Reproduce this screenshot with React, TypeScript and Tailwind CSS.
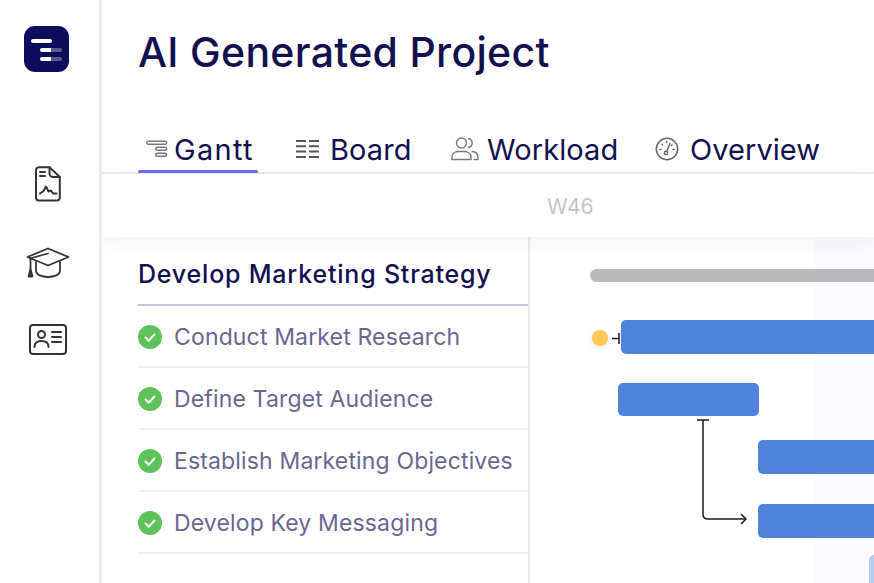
import React from "react";

const navy = "#12104f";

function Logo() {
  return (
    <div className="relative w-[45px] h-[46px] ml-[-3px] rounded-[11px] bg-[#0e0c5c]">
      <div className="absolute left-[7px] top-[13px] w-[21px] h-[4px] rounded-full bg-white" />
      <div className="absolute left-[16px] top-[22px] w-[22px] h-[4px] rounded-full bg-gradient-to-r from-white from-50% to-[#5a5890] to-50%" />
      <div className="absolute left-[16px] top-[31px] w-[22px] h-[4px] rounded-full bg-gradient-to-r from-white from-50% to-[#5a5890] to-50%" />
    </div>
  );
}

function DocIcon() {
  return (
    <svg width="26" height="36" viewBox="0 0 26 36" fill="none" stroke="#33333b" strokeWidth="2" strokeLinecap="round" strokeLinejoin="round">
      <path d="M4 1.2H14.5L24.8 11V31.5a3 3 0 0 1-3 3H4a3 3 0 0 1-3-3V4.2a3 3 0 0 1 3-3Z" />
      <path d="M14.5 1.2V7.5a3.5 3.5 0 0 0 3.5 3.5H24.8" />
      <path d="M5 6H10M5 10H10" />
      <path d="M5 27.5L8.5 25L11 20.5L13.5 25.5L16 24.5L18 27.5H21.5" />
    </svg>
  );
}

function CapIcon() {
  return (
    <svg width="44" height="32" viewBox="0 0 44 32" fill="none" stroke="#33333b" strokeWidth="1.8" strokeLinecap="round" strokeLinejoin="round">
      <path d="M22 1.5L42.5 10L22 18.5L1.5 10Z" />
      <path d="M4 11.5L22 6.5" />
      <path d="M10 15V23.5C10 28 16 30 22 30C28 30 34 28 34 23.5V15" />
      <path d="M4.5 11.5V22" />
      <path d="M4.5 22L6.5 29.5H2.5Z" fill="#33333b" />
    </svg>
  );
}

function IdIcon() {
  return (
    <svg width="38" height="31" viewBox="0 0 38 31" fill="none" stroke="#33333b" strokeWidth="2" strokeLinecap="round" strokeLinejoin="round">
      <rect x="1" y="1" width="36" height="29" rx="3" />
      <circle cx="12.5" cy="10.5" r="3.5" />
      <path d="M5.5 23C5.5 19 8.5 17 12.5 17C16.5 17 19.5 19 19.5 23" />
      <path d="M23 8H32M23 13H32M23 18H32" />
    </svg>
  );
}

function GanttIcon() {
  return (
    <svg width="22" height="18" viewBox="0 0 22 18" fill="none" stroke="#77777f" strokeWidth="1.4">
      <rect x="0.7" y="1.2" width="20" height="3" rx="1.5" />
      <rect x="9.7" y="7.2" width="11" height="3" rx="1.5" />
      <rect x="9.7" y="13.2" width="11" height="3" rx="1.5" />
    </svg>
  );
}

function BoardIcon() {
  return (
    <svg width="23" height="20" viewBox="0 0 23 20" fill="none" stroke="#55555c" strokeWidth="2">
      <path d="M0 2H10M0 7.3H10M0 12.6H10M0 18H10M13 2H23M13 7.3H23M13 12.6H23M13 18H23" />
    </svg>
  );
}

function PeopleIcon() {
  return (
    <svg width="28" height="24" viewBox="0 0 28 24" fill="none" stroke="#77777f" strokeWidth="1.4" strokeLinecap="round" strokeLinejoin="round">
      <circle cx="10.5" cy="6" r="5" />
      <path d="M1 22.5V20C1 16.5 4 14.5 7.5 14.5H13.5C17 14.5 20 16.5 20 20V22.5Z" />
      <path d="M17.5 1.5A4.6 4.6 0 0 1 17.5 10.5" />
      <path d="M21 14.5C24.5 14.8 27 16.8 27 20V22.5H23" />
    </svg>
  );
}

function GaugeIcon() {
  return (
    <svg width="24" height="24" viewBox="0 0 24 24" fill="none" stroke="#66666d" strokeWidth="1.5" strokeLinecap="round">
      <circle cx="12" cy="12" r="10.7" />
      <circle cx="11" cy="16" r="1.7" />
      <path d="M11.7 14.4L15 6.5" />
      <path d="M5 12.5H6M7 7.5L7.6 8M11.5 4.5V5.5M18 12.5H19M17 8L16.6 8.4" />
    </svg>
  );
}

function Check() {
  return (
    <svg width="24" height="24" viewBox="0 0 24 24" fill="none" className="shrink-0">
      <circle cx="12" cy="12" r="12" fill="#5ec15a" />
      <path d="M7.5 12.5L10.7 15.7L16.5 9.5" stroke="#fff" strokeWidth="2" strokeLinecap="round" strokeLinejoin="round" />
    </svg>
  );
}

function Tab({ icon, label, gap, width, text, active }: { icon: React.ReactNode; label: string; gap: string; width: string; text: string; active?: boolean }) {
  return (
    <div className={`relative flex items-center h-[46px] ${gap} ${width}`}>
      {icon}
      <span className={`relative top-[1px] text-[29px] leading-[34px] text-[#12104f] ${text}`}>{label}</span>
      {active && <div className="absolute left-0 right-0 bottom-[-1px] h-[3px] rounded-full bg-[#6a6af0]" />}
    </div>
  );
}

const tasks = ["Conduct Market Research", "Define Target Audience", "Establish Marketing Objectives", "Develop Key Messaging"];

export default function App() {
  return (
    <div className="flex w-[874px] h-[583px] overflow-hidden bg-white font-['Inter','Liberation_Sans',sans-serif]">
      <aside className="flex flex-col items-center w-[102px] shrink-0 border-r-[3px] border-[#e8e8ee] pt-[26px] pr-[3px]">
        <Logo />
        <div className="mt-[94px]"><DocIcon /></div>
        <div className="mt-[45px]"><CapIcon /></div>
        <div className="mt-[45px]"><IdIcon /></div>
      </aside>
      <main className="flex flex-col flex-1 min-w-0 overflow-hidden">
        <h1 className="pl-[36px] pt-[27px] h-[126px] text-[41px] leading-[50px] font-[450] tracking-[0.3px]" style={{ color: navy }}>AI Generated Project</h1>
        <nav className="flex h-[48px] pl-[36px] border-b-2 border-[#e9e9ef]">
          <Tab icon={<GanttIcon />} label="Gantt" gap="gap-[6px]" width="w-[120px] pl-[8px]" text="tracking-[1.3px]" active />
          <Tab icon={<BoardIcon />} label="Board" gap="gap-[11px]" width="ml-[38px] w-[116px]" text="tracking-[0.1px]" />
          <Tab icon={<PeopleIcon />} label="Workload" gap="gap-[8px]" width="ml-[39px] w-[168px]" text="tracking-[0.1px]" />
          <Tab icon={<GaugeIcon />} label="Overview" gap="gap-[11px]" width="ml-[36px] w-[166px]" text="tracking-[0.05px]" />
        </nav>
        <div className="relative z-10 flex items-center h-[63px] pl-[445px] pt-[2px] text-[21px] text-[#c4c4c8] bg-white shadow-[0_6px_18px_rgba(30,30,90,0.05)]">W46</div>
        <div className="flex flex-1 min-h-0">
          <section className="w-[428px] shrink-0 pl-[36px] border-r-2 border-[#e9e9ef]">
            <h2 className="flex items-center h-[69px] pt-[8px] border-b-2 border-[#c5c3d9] text-[25px] font-[450] tracking-[0.8px] text-[#12104f]">Develop Marketing Strategy</h2>
            {tasks.map((t) => (
              <div key={t} className="flex items-center gap-[12px] h-[62px] pt-[1px] border-b-2 border-[#efeef5] text-[23px] tracking-[0.15px] text-[#6a678f]">
                <Check />
                <span className="relative top-[1px] whitespace-nowrap">{t}</span>
              </div>
            ))}
          </section>
          <section className="relative flex-1 min-w-0 overflow-hidden">
            <div className="absolute left-[285px] top-0 right-0 bottom-0 bg-[#fafaff]" />
            <div className="absolute left-[60px] top-[32px] right-[-10px] h-[13px] rounded-full bg-[#bab9bb]" />
            <div className="absolute left-[62px] top-[93px] w-[16px] h-[16px] rounded-full bg-[#fcc858] shadow-[0_2px_6px_rgba(0,0,0,0.1)]" />
            <div className="absolute left-[91px] top-[83px] right-[-10px] h-[34px] rounded-[5px] bg-[#5083dc]" />
            <div className="absolute left-[88px] top-[146px] w-[141px] h-[33px] rounded-[5px] bg-[#5083dc]" />
            <div className="absolute left-[228px] top-[203px] right-[-10px] h-[34px] rounded-[5px] bg-[#5083dc]" />
            <div className="absolute left-[228px] top-[267px] right-[-10px] h-[34px] rounded-[5px] bg-[#5083dc]" />
            <div className="absolute left-[339px] top-[318px] right-[-10px] h-[40px] rounded-[5px] bg-[#b5cdf3]" />
            <svg className="absolute left-0 top-0" width="344" height="346" fill="none" stroke="#1a1a1f" strokeWidth="1.5" strokeLinejoin="round">
              <path d="M82 101.5H89M89 96V107" />
              <path d="M167 183H179M173 183V277Q173 282 178 282H216" />
              <path d="M211 277L216 282L211 287" />
            </svg>
          </section>
        </div>
      </main>
    </div>
  );
}
